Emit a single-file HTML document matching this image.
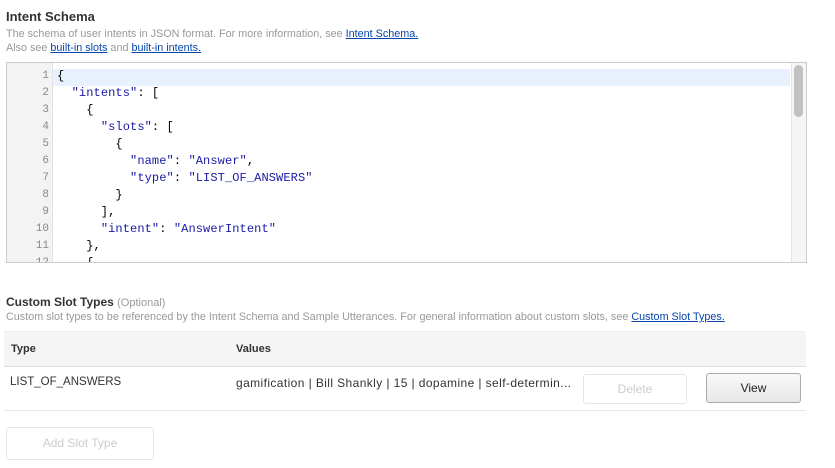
<!DOCTYPE html>
<html><head><meta charset="utf-8"><style>
body{margin:0;width:835px;height:468px;background:#fff;font-family:"Liberation Sans",Arial,sans-serif;position:relative;overflow:hidden}
.a{position:absolute}
h1{position:absolute;left:6px;top:9px;margin:0;font-size:13px;font-weight:bold;color:#333}
.d{color:#999;font-size:10.8px;line-height:14px}
a{color:#0645ad;text-decoration:underline}
.ed{left:6px;top:62px;width:799px;height:199px;border:1px solid #ccc;overflow:hidden}
.gut{left:0;top:0;width:45px;height:199px;background:#f3f3f3;border-right:1px solid #e2e2e2}
.ln{position:absolute;left:0;width:42px;text-align:right;font:11px "Liberation Mono",monospace;color:#888}
.cl{position:absolute;left:50px;font:12px "Liberation Mono",monospace;letter-spacing:0.1px;color:#000;white-space:pre}
.k{color:#1a1aa6}
.btn{position:absolute;border:1px solid #ddd;border-radius:3px;font-size:12px;text-align:center;box-sizing:border-box}
</style></head><body>
<h1>Intent Schema</h1>
<div class="a d" style="left:6px;top:27px">The schema of user intents in JSON format. For more information, see <a>Intent Schema.</a><br>Also see <a>built-in slots</a> and <a>built-in intents.</a></div>
<div class="a ed">
<div class="a gut"></div>
<div class="a" style="left:46px;top:6px;width:737px;height:17px;background:#e8f2fe"></div>
<div class="a" style="left:784px;top:0;width:15px;height:199px;background:#f5f5f5;border-left:1px solid #e5e5e5"></div>
<div class="a" style="left:787px;top:2px;width:9px;height:52px;background:#c1c1c1;border-radius:5px"></div>
<div class="ln" style="top:7px">1</div><div class="ln" style="top:24px">2</div><div class="ln" style="top:41px">3</div><div class="ln" style="top:58px">4</div><div class="ln" style="top:75px">5</div><div class="ln" style="top:92px">6</div><div class="ln" style="top:109px">7</div><div class="ln" style="top:126px">8</div><div class="ln" style="top:143px">9</div><div class="ln" style="top:160px">10</div><div class="ln" style="top:177px">11</div><div class="ln" style="top:194px">12</div>
<div class="cl" style="top:6px">{</div>
<div class="cl" style="top:23px">  <span class="k">"intents"</span>: [</div>
<div class="cl" style="top:40px">    {</div>
<div class="cl" style="top:57px">      <span class="k">"slots"</span>: [</div>
<div class="cl" style="top:74px">        {</div>
<div class="cl" style="top:91px">          <span class="k">"name"</span>: <span class="k">"Answer"</span>,</div>
<div class="cl" style="top:108px">          <span class="k">"type"</span>: <span class="k">"LIST_OF_ANSWERS"</span></div>
<div class="cl" style="top:125px">        }</div>
<div class="cl" style="top:142px">      ],</div>
<div class="cl" style="top:159px">      <span class="k">"intent"</span>: <span class="k">"AnswerIntent"</span></div>
<div class="cl" style="top:176px">    },</div>
<div class="cl" style="top:193px">    {</div>
</div>
<div class="a" style="left:6px;top:295px;font-size:12px;font-weight:bold;color:#333">Custom Slot Types <span style="font-weight:normal;color:#999;font-size:11px">(Optional)</span></div>
<div class="a d" style="left:6px;top:310px">Custom slot types to be referenced by the Intent Schema and Sample Utterances. For general information about custom slots, see <a>Custom Slot Types.</a></div>
<div class="a" style="left:4px;top:331px;width:802px;height:34px;background:#f5f5f5;border-bottom:1px solid #ddd;border-top:1px solid #eee"></div>
<div class="a" style="left:11px;top:343px;font-size:11px;font-weight:bold;color:#333">Type</div>
<div class="a" style="left:236px;top:343px;font-size:11px;font-weight:bold;color:#333">Values</div>
<div class="a" style="left:4px;top:410px;width:802px;height:1px;background:#e8e8e8"></div>
<div class="a" style="left:10px;top:376px;font-size:11.5px;color:#333">LIST_OF_ANSWERS</div>
<div class="a" style="left:236px;top:376px;font-size:12px;letter-spacing:0.4px;color:#333">gamification | Bill Shankly | 15 | dopamine | self-determin...</div>
<div class="btn" style="left:583px;top:374px;width:104px;height:30px;line-height:28px;color:#ccc;border-color:#e5e5e5">Delete</div>
<div class="btn" style="left:706px;top:373px;width:95px;height:30px;line-height:28px;color:#222;border-color:#aaa;background:linear-gradient(#f8f8f8,#e8e8e8)">View</div>
<div class="btn" style="left:6px;top:427px;width:148px;height:33px;line-height:31px;color:#ccc;border-color:#e5e5e5">Add Slot Type</div>
</body></html>
